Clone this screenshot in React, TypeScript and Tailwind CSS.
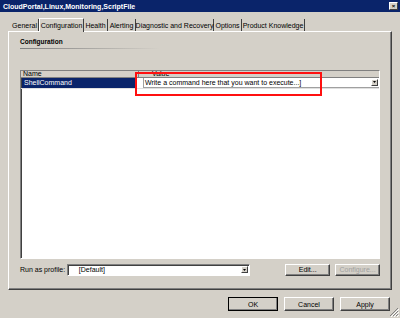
import React from 'react';

const tabs = [
  { label: 'General', w: 'w-[28px]' },
  { label: 'Configuration', w: 'w-[45px]' },
  { label: 'Health', w: 'w-[24px]' },
  { label: 'Alerting', w: 'w-[28px]' },
  { label: 'Diagnostic and Recovery', w: 'w-[78px]' },
  { label: 'Options', w: 'w-[28px]' },
  { label: 'Product Knowledge', w: 'w-[63px]' },
];

function WinButton({ label, disabled, className }: { label: string; disabled?: boolean; className?: string }) {
  return (
    <div
      className={`flex items-center justify-center border border-t-white border-l-white border-r-[#404040] border-b-[#404040] shadow-[inset_-1px_-1px_0_#808080] ${disabled ? 'text-[#a0a0a0]' : 'text-black'} ${className ?? ''}`}
    >
      {label}
    </div>
  );
}

function ArrowBox() {
  return (
    <div className="w-[7px] h-[7px] bg-[#d4d0c8] border border-t-white border-l-white border-r-[#404040] border-b-[#404040] flex items-center justify-center">
      <svg width="3" height="2" viewBox="0 0 3 2">
        <path d="M0 0h3L1.5 2z" fill="#000" />
      </svg>
    </div>
  );
}

export default function App() {
  return (
    <div className="w-[400px] h-[318px] bg-[#d4d0c8] flex flex-col overflow-hidden text-[7px] leading-none text-black whitespace-nowrap" style={{ fontFamily: '"Liberation Sans", Arial, sans-serif' }}>
      {/* title bar */}
      <div className="h-[12px] bg-[#0a246a] flex items-center justify-between pl-[3px] pr-[2px]">
        <span className="text-white font-bold text-[7px]">CloudPortal,Linux,Monitoring,ScriptFile</span>
        <div className="w-[9px] h-[8px] bg-[#d4d0c8] border border-t-white border-l-white border-r-[#404040] border-b-[#404040] flex items-center justify-center text-[6px] font-bold">
          ×
        </div>
      </div>

      {/* tabs */}
      <div className="flex items-end h-[18px] pl-[11px] mt-[1px]">
        {tabs.map((t, i) =>
          i === 1 ? (
            <div
              key={t.label}
              className={`${t.w} h-[14px] flex items-center justify-center bg-[#d4d0c8] border-t border-l border-white border-r border-r-[#404040] rounded-t-[1px] relative z-10 -mb-px`}
            >
              {t.label}
            </div>
          ) : (
            <div key={t.label} className={`${t.w} h-[12px] flex items-center justify-center border-r border-r-[#404040]`}>
              {t.label}
            </div>
          )
        )}
      </div>

      {/* tab panel */}
      <div className="mx-[8px] h-[259px] border border-t-white border-l-white border-r-[#404040] border-b-[#404040] shadow-[inset_-1px_-1px_0_#808080] flex flex-col px-[11px]">
        <div className="mt-[7px] font-bold text-[6.5px]">Configuration</div>
        <div className="mt-[2px] h-px w-[140px] bg-gradient-to-r from-[#808080] to-transparent" />
        <div className="mt-[21px] h-[189px] bg-white border border-t-[#808080] border-l-[#808080] border-r-white border-b-white shadow-[inset_1px_1px_0_#404040] flex flex-col relative">
          <div className="h-[7px] flex bg-[#d4d0c8] border-b border-b-[#808080]">
            <div className="w-[118px] pl-[2px] border-r border-r-[#808080] flex items-center">Name</div>
            <div className="flex-1 pl-[13px] flex items-center">Value</div>
          </div>
          <div className="h-[11px] flex border-b border-b-[#e0e0e0]">
            <div className="w-[114px] ml-[1px] bg-[#0a246a] text-white pl-[2px] flex items-center">ShellCommand</div>
            <div className="flex-1 ml-[7px] flex items-center justify-between pr-[1px] border-l border-b border-[#a0a0a0]">
              <span className="pl-[1px]">Write a command here that you want to execute...]</span>
              <ArrowBox />
            </div>
          </div>
          <div className="absolute left-[114px] top-[1px] w-[187px] h-[24px] border-2 border-[#ff1010]" />
        </div>
        <div className="mt-[5px] flex items-center">
          <span className="w-[47px]">Run as profile:</span>
          <div className="w-[184px] h-[12px] bg-white border border-t-[#808080] border-l-[#808080] border-r-white border-b-white shadow-[inset_1px_1px_0_#404040] flex items-center justify-between pr-[1px]">
            <span className="pl-[11px]">[Default]</span>
            <ArrowBox />
          </div>
          <WinButton label="Edit..." className="ml-[35px] w-[45px] h-[12px]" />
          <WinButton label="Configure..." disabled className="ml-[5px] w-[45px] h-[12px]" />
        </div>
      </div>

      {/* bottom buttons */}
      <div className="flex justify-end pr-[10px] mt-[7px] gap-[6px]">
        <WinButton label="OK" className="w-[50px] h-[14px] outline outline-1 outline-black -outline-offset-1" />
        <WinButton label="Cancel" className="w-[50px] h-[14px]" />
        <WinButton label="Apply" className="w-[50px] h-[14px]" />
      </div>
      <div className="flex-1 relative">
        <svg className="absolute right-[1px] bottom-[1px]" width="10" height="10" viewBox="0 0 10 10">
          <path d="M9 1L1 9M9 4L4 9M9 7L7 9" stroke="#808080" strokeWidth="1" />
          <path d="M10 2L2 10M10 5L5 10M10 8L8 10" stroke="#ffffff" strokeWidth="1" />
        </svg>
      </div>
    </div>
  );
}
